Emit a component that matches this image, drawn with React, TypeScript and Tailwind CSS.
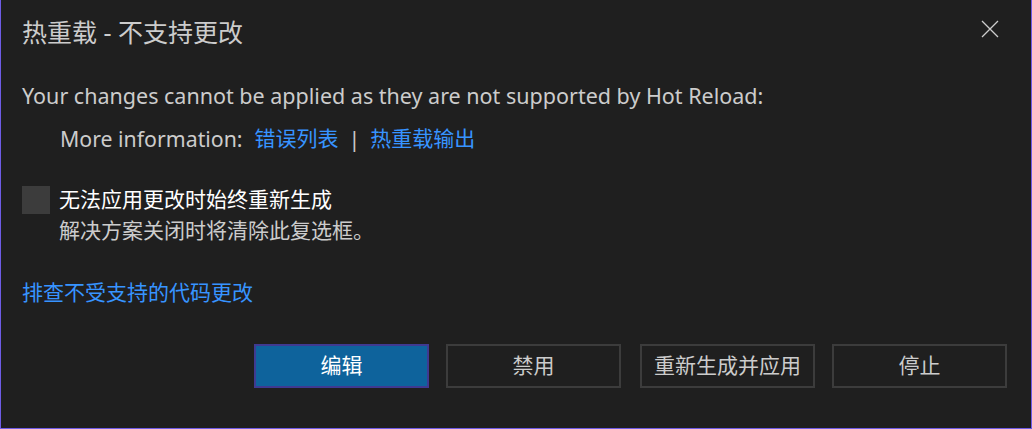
const font = "font-['Noto_Sans','Noto_Sans_CJK_SC',sans-serif]"

const buttons = [
  { label: "编辑", primary: true, gap: "" },
  { label: "禁用", primary: false, gap: "ml-[17px]" },
  { label: "重新生成并应用", primary: false, gap: "ml-[19px]" },
  { label: "停止", primary: false, gap: "ml-[17px]" },
]

export default function App() {
  return (
    <div
      className={`flex h-[429px] w-[1032px] flex-col border-x border-b border-[#6e5ce6] bg-[#1f1f1f] text-[#cccccc] ${font}`}
    >
      {/* header */}
      <div className="flex h-[64px] items-center justify-between pl-[21px] pr-[32px]">
        <h1 className="text-[25px] leading-none text-[#cccccc]">热重载 - 不支持更改</h1>
        <svg width="18" height="18" viewBox="0 0 18 18" className="-mt-[6px] text-[#cccccc]">
          <path d="M1 1 L17 17 M17 1 L1 17" stroke="currentColor" strokeWidth="1.3" fill="none" />
        </svg>
      </div>

      <div className="flex flex-col pl-[21px]">
        <div className="mt-[16px] flex h-[32px] items-center text-[21.5px]">
          Your changes cannot be applied as they are not supported by Hot Reload:
        </div>

        <div className="mt-[11px] flex h-[32px] items-center pl-[38px] text-[21.3px]">
          <span>More information:</span>
          <a className="ml-[12px] text-[21px] text-[#3794ff]">错误列表</a>
          <span className="mx-[10px]">|</span>
          <a className="text-[21px] text-[#3794ff]">热重载输出</a>
        </div>

        {/* checkbox */}
        <div className="mt-[31px] flex items-start">
          <div className="h-[28px] w-[28px] bg-[#3c3c3c]" />
          <div className="ml-[9px] flex flex-col">
            <div className="flex h-[27px] items-center text-[21px] text-white">
              无法应用更改时始终重新生成
            </div>
            <div className="mt-[2px] flex h-[32px] items-center text-[21px]">
              解决方案关闭时将清除此复选框。
            </div>
          </div>
        </div>

        <div className="mt-[30px] flex h-[32px] items-center text-[21px] text-[#3794ff]">
          排查不受支持的代码更改
        </div>
      </div>

      {/* buttons */}
      <div className="mt-[35px] flex justify-end pr-[24px]">
        {buttons.map((b) => (
          <button
            key={b.label}
            className={`${b.gap} flex h-[44px] w-[175px] items-center justify-center border-2 text-[21px] ${
              b.primary
                ? "border-[#3f3a91] bg-[#0e639c] text-white"
                : "border-[#3c3c3c] bg-[#1f1f1f] text-[#cccccc]"
            }`}
          >
            {b.label}
          </button>
        ))}
      </div>
    </div>
  )
}
